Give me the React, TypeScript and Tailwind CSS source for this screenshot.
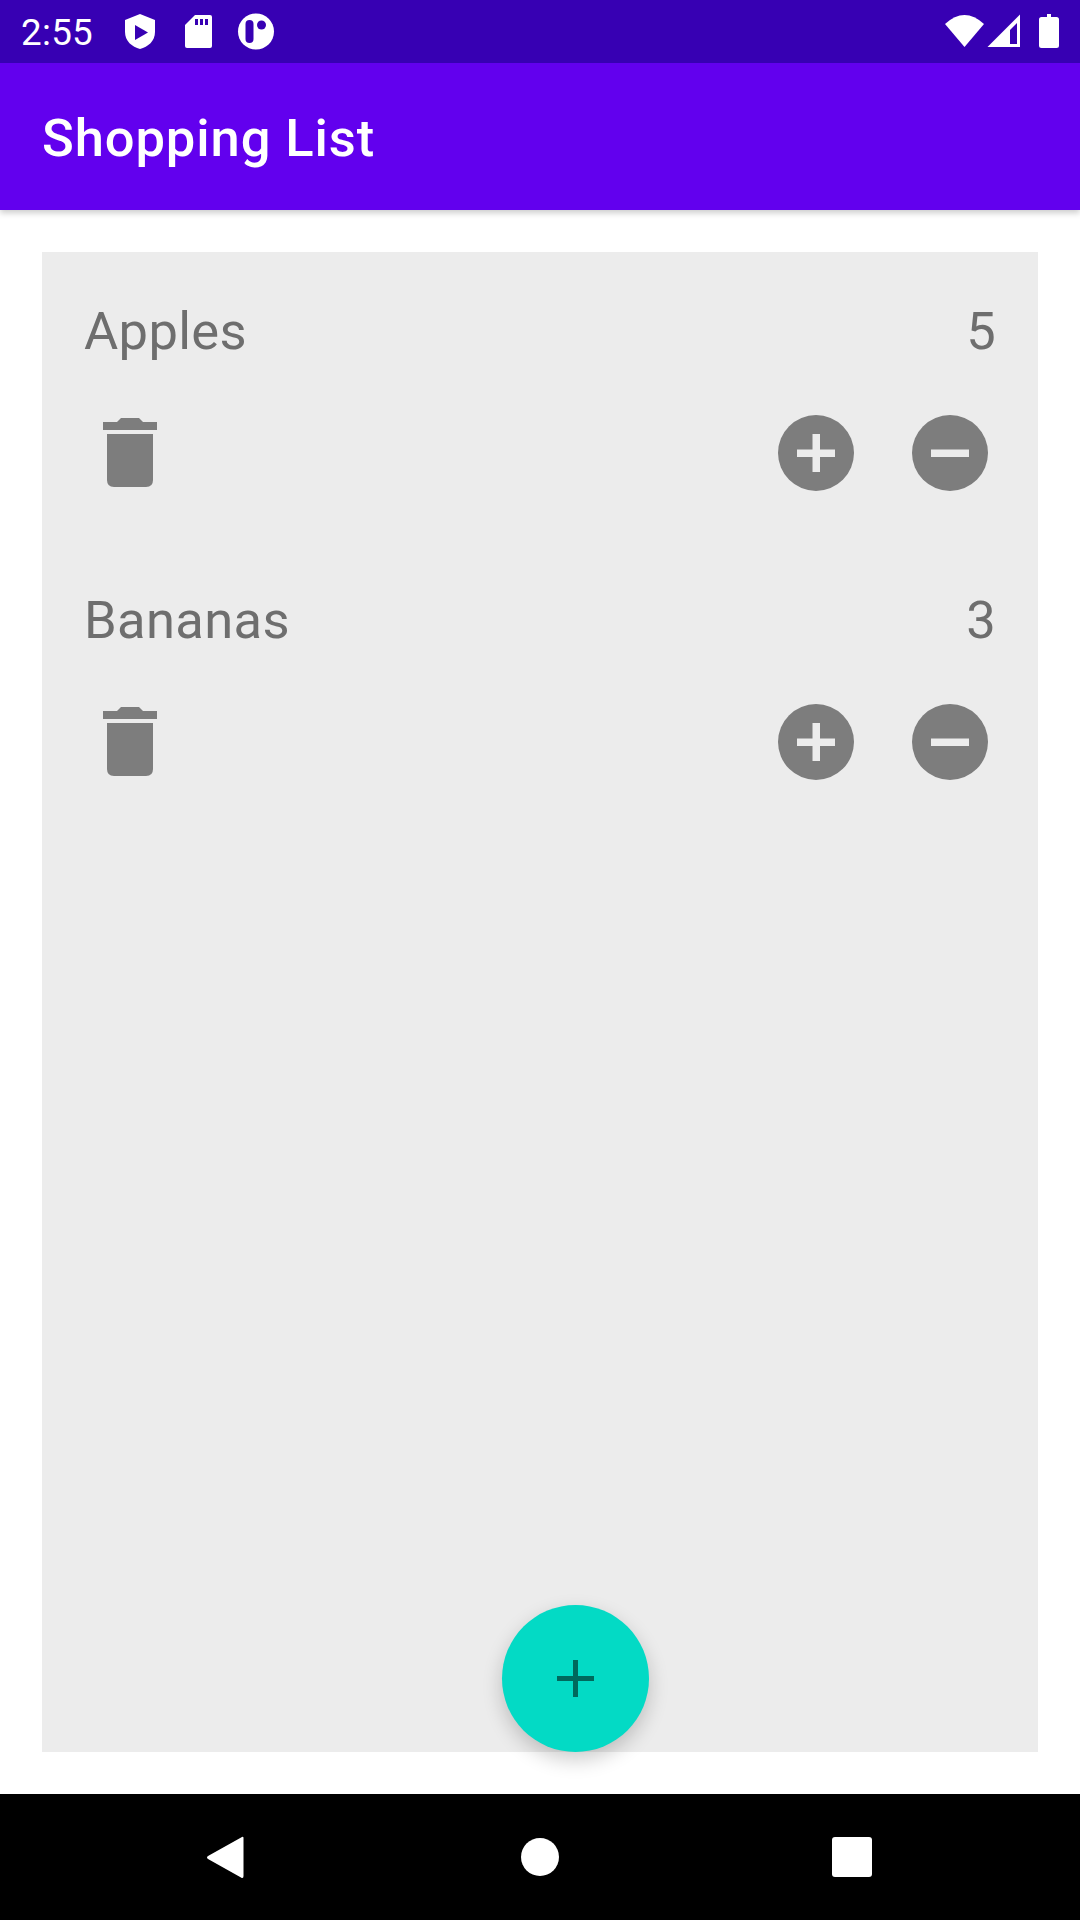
import React from 'react';

const font = { fontFamily: 'Roboto, sans-serif' };

const StatusIcons = () => (
  <svg width="160" height="63" viewBox="0 0 160 63" className="ml-[33px]">
    {/* shield */}
    <path d="M20 14 L35 20 V32 C35 41 28 47 20 49 C12 47 5 41 5 32 V20 Z" fill="#fff" />
    <path d="M15 25 L28 32.5 L15 40 Z" fill="#3700B3" />
    {/* sd card */}
    <path d="M75 15 H90 Q92 15 92 17 V46 Q92 48 90 48 H67 Q65 48 65 46 V25 Z" fill="#fff" />
    <rect x="75" y="19" width="3" height="6" fill="#3700B3" />
    <rect x="80" y="19" width="3" height="6" fill="#3700B3" />
    <rect x="85" y="19" width="3" height="6" fill="#3700B3" />
    {/* app */}
    <circle cx="136" cy="31.5" r="18" fill="#fff" />
    <rect x="125.5" y="20" width="8" height="23" rx="4" fill="#3700B3" />
    <circle cx="141.5" cy="25" r="4.5" fill="#3700B3" />
  </svg>
);

const SystemIcons = () => (
  <svg width="135" height="63" viewBox="0 0 135 63" className="mr-[20px]">
    <path d="M945 24 Q964.5 6 984 24 L964.5 47 Z" transform="translate(-925 0)" fill="#fff" />
    <path d="M987.5 47 L1020 14.5 V47 Z" transform="translate(-925 0)" fill="#fff" />
    <path d="M1010 30 L1017 23 V44 H1010 Z" transform="translate(-925 0)" fill="#3700B3" />
    <path d="M1047 14 H1051 V17 H1056.5 Q1059 17 1059 19.5 V45.5 Q1059 48 1056.5 48 H1041.5 Q1039 48 1039 45.5 V19.5 Q1039 17 1041.5 17 H1047 Z" transform="translate(-925 0)" fill="#fff" />
  </svg>
);

const Trash = () => (
  <svg width="54" height="70" viewBox="0 0 54 70" fill="#7d7d7d">
    <path d="M0 4 H14 L18 0 H36 L40 4 H54 V12 H0 Z" />
    <path d="M4 16 H50 V62 Q50 69 43 69 H11 Q4 69 4 62 Z" />
  </svg>
);

const RoundButton = ({ minus }: { minus?: boolean }) => (
  <svg width="76" height="76" viewBox="0 0 76 76">
    <circle cx="38" cy="38" r="38" fill="#7d7d7d" />
    <rect x="19" y="34.5" width="38" height="7.5" fill="#ececec" />
    {!minus && <rect x="34.5" y="19" width="7.5" height="38" fill="#ececec" />}
  </svg>
);

const Item = ({ name, qty }: { name: string; qty: number }) => (
  <div className="h-[289px] pt-[48px] px-[42px]">
    <div className="flex justify-between h-[62px] text-[52.5px] leading-[62px] tracking-[0.35px] text-[#6e6e6e]">
      <span>{name}</span>
      <span>{qty}</span>
    </div>
    <div className="flex items-center justify-between h-[80px] mt-[51px] pl-[19px] pr-[8px]">
      <Trash />
      <div className="flex gap-[58px]">
        <RoundButton />
        <RoundButton minus />
      </div>
    </div>
  </div>
);

export default function App() {
  return (
    <div className="w-[1080px] h-[1920px] flex flex-col bg-white overflow-hidden" style={font}>
      <div className="relative z-10 shadow-[0_3px_6px_rgba(0,0,0,0.2)]">
        <div className="h-[63px] bg-[#3700b3] flex items-center justify-between text-white">
          <div className="flex items-center">
            <span className="pl-[21px] pt-[4px] text-[36.75px] leading-none tracking-[0.3px] w-[87px] whitespace-nowrap">2:55</span>
            <StatusIcons />
          </div>
          <SystemIcons />
        </div>
        <div className="h-[147px] bg-[#6200ee] flex items-center pl-[42px] pt-[4px] text-white text-[52.5px] tracking-[0.9px] font-medium">
          Shopping List
        </div>
      </div>
      <main className="flex-1 p-[42px] min-h-0">
        <div className="relative h-full bg-[#ececec]">
          <Item name="Apples" qty={5} />
          <Item name="Bananas" qty={3} />
          <button className="absolute left-[460px] bottom-0 w-[147px] h-[147px] rounded-full bg-[#03dac5] flex items-center justify-center shadow-[0_8px_20px_rgba(0,0,0,0.2)]">
            <svg width="37" height="37" viewBox="0 0 37 37" fill="#00695c">
              <rect x="0" y="16" width="37" height="5" />
              <rect x="16" y="0" width="5" height="37" />
            </svg>
          </button>
        </div>
      </main>
      <nav className="h-[126px] bg-black relative flex items-center">
        <svg width="1080" height="126" viewBox="0 0 1080 126" fill="#fff">
          <path d="M242 43 Q243.5 42 243.5 44 V82 Q243.5 85 241 83.5 L208 65 Q206 63.5 208 62 Z" />
          <circle cx="540" cy="63" r="19" />
          <rect x="832" y="43" width="40" height="40" rx="3" />
        </svg>
      </nav>
    </div>
  );
}
